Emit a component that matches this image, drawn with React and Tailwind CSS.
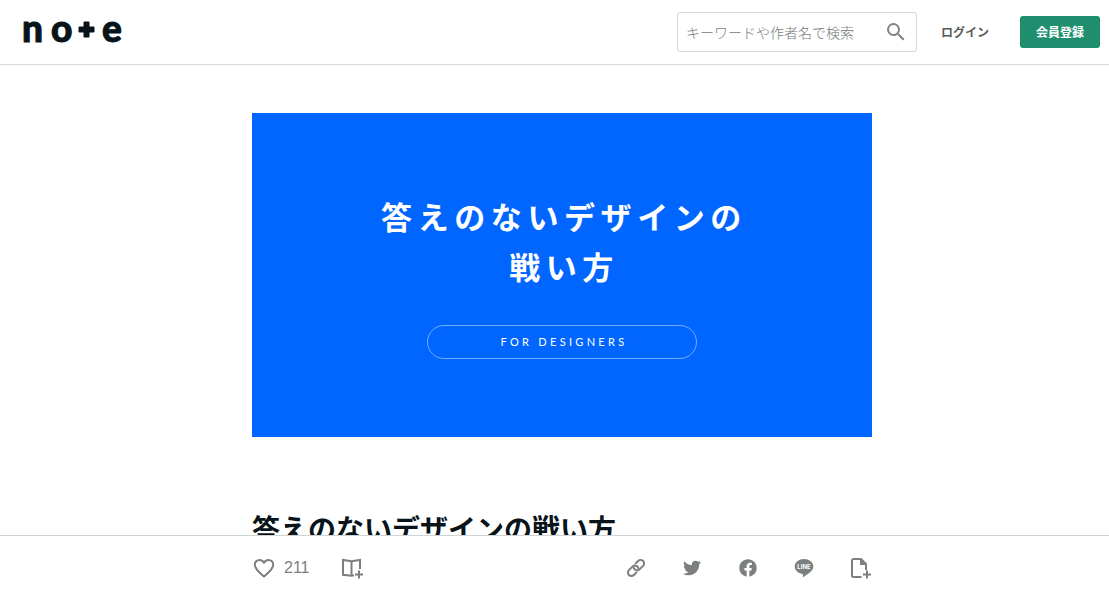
import React from 'react';
import { MdSearch } from 'react-icons/md';
import { FaFacebook, FaTwitter } from 'react-icons/fa';

function Logo() {
  return (
    <a href="#" aria-label="note" className="block">
      <svg className="h-16 w-[104px] overflow-visible fill-[#08131a] stroke-[#08131a] font-['Lato',sans-serif] text-[37px] leading-none font-black" viewBox="0 0 104 64" aria-hidden="true">
        <text x="-2" y="42">n</text>
        <text x="27" y="42">o</text>
        <path d="M60 22h5v5h5v5h-5v5h-5v-5h-5v-5h5z" />
        <text x="78" y="42">e</text>
      </svg>
    </a>
  );
}

function Header() {
  return (
    <header className="flex h-[65px] shrink-0 items-center border-b border-[#d9dbdb] pr-[9px] pl-6">
      <Logo />
      <form className="ml-auto flex h-10 w-60 items-center rounded-[3px] border border-[#d4d7d7] pr-2 pl-2" onSubmit={(e) => e.preventDefault()}>
        <input
          type="search"
          aria-label="キーワードや作者名で検索"
          placeholder="キーワードや作者名で検索"
          className="h-full min-w-0 flex-1 bg-transparent text-sm font-light text-[#444] outline-none placeholder:text-[#757b7b]"
        />
        <button type="submit" aria-label="検索" className="text-[#828585]">
          <MdSearch className="size-6" />
        </button>
      </form>
      <a href="#" className="ml-6 text-xs font-bold text-[#5a5c5c]">ログイン</a>
      <button type="button" className="ml-[31px] h-8 rounded-[3px] bg-[#1e8e6e] px-4 text-xs font-bold text-white">会員登録</button>
    </header>
  );
}

function Cover() {
  return (
    <div className="flex h-[324px] flex-col items-center bg-[#0066ff] pt-[78px] text-white">
      <p className="pl-1 text-center text-[31px] leading-[50px] font-bold tracking-[0.18em]">
        答えのないデザインの
        <br />
        戦い方
      </p>
      <p className="mt-[34px] flex h-[34px] w-[270px] items-center justify-center rounded-full border border-[#73adff] pl-1 font-['Lato',sans-serif] text-[11px] leading-4 tracking-[0.3em]">
        FOR DESIGNERS
      </p>
    </div>
  );
}

function HeartIcon() {
  return (
    <svg className="size-6" viewBox="0 0 24 24" fill="none" stroke="currentColor" strokeWidth="2" strokeLinejoin="round" aria-hidden="true">
      <path d="M12 20.500C8 17 2.800 13.200 2.800 8.800 2.800 5.900 4.900 4 7.400 4 9.400 4 11 5.100 12 6.800 13 5.100 14.600 4 16.600 4 19.100 4 21.200 5.900 21.200 8.800 21.200 13.200 16 17 12 20.500Z" />
    </svg>
  );
}

function MagazineAddIcon() {
  return (
    <svg className="size-6" viewBox="0 0 24 24" fill="none" stroke="currentColor" strokeWidth="2" aria-hidden="true">
      <path d="M14 19.200 11.500 19.800 3 18.800V4L11.500 5.200 20 4V13" />
      <path d="M11.500 5.200V20" />
      <path d="M19 14.500V22.500M15 18.500H23" />
    </svg>
  );
}

function LinkIcon() {
  return (
    <svg className="size-6" viewBox="0 0 24 24" fill="none" stroke="currentColor" strokeWidth="2" strokeLinecap="round" aria-hidden="true">
      <g transform="rotate(-45 12 12)">
        <path d="M9 15.500H5.500A3.500 3.500 0 0 1 5.500 8.500H10.500A3.500 3.500 0 0 1 13.500 13.700" />
        <path d="M15 8.500H18.500A3.500 3.500 0 0 1 18.500 15.500H13.500A3.500 3.500 0 0 1 10.500 10.300" />
      </g>
    </svg>
  );
}

function LineIcon() {
  return (
    <svg className="size-6" viewBox="0 0 24 24" aria-hidden="true">
      <path fill="currentColor" d="M12 3C6.800 3 2.700 6.300 2.700 10.500c0 3.700 3.300 6.700 7.700 7.400.6.200.7.500.6 1l-.2 1.500c0 .4.200.7.700.5 3.500-1.900 6.200-4.100 8.200-6.300 1.100-1.200 1.600-2.600 1.600-4.100C21.300 6.300 17.200 3 12 3Z" />
      <text x="12" y="12.800" textAnchor="middle" fill="white" className="font-['Inter',sans-serif] text-[6px] leading-none font-bold">LINE</text>
    </svg>
  );
}

function FileAddIcon() {
  return (
    <svg className="size-6" viewBox="0 0 24 24" fill="none" stroke="currentColor" strokeWidth="2" aria-hidden="true">
      <path d="M13.500 21H5.500A1.500 1.500 0 0 1 4 19.500V4.500A1.500 1.500 0 0 1 5.500 3H13L18 8V14" />
      <path d="M12 3 18 9H12Z" fill="currentColor" stroke="none" />
      <path d="M19 14.500V22.500M15 18.500H23" />
    </svg>
  );
}

function ActionBar() {
  return (
    <footer className="h-[65px] shrink-0 border-t border-[#d0d3d3] bg-white pl-[15px]">
      <div className="mx-auto flex h-full max-w-[620px] items-center text-[#7b7f7f]">
        <button type="button" aria-label="スキ" className="flex items-center gap-2">
          <HeartIcon />
          <span className="font-['Liberation_Sans',sans-serif] text-base">211</span>
        </button>
        <button type="button" aria-label="マガジンに追加" className="ml-[30px]">
          <MagazineAddIcon />
        </button>
        <div className="ml-auto flex items-center gap-8">
          <button type="button" aria-label="リンクをコピー"><LinkIcon /></button>
          <a href="#" aria-label="Twitter" className="flex size-6 items-center justify-center"><FaTwitter className="size-[18px]" /></a>
          <a href="#" aria-label="Facebook" className="flex size-6 items-center justify-center"><FaFacebook className="size-[18px]" /></a>
          <a href="#" aria-label="LINE"><LineIcon /></a>
          <button type="button" aria-label="ファイルに追加"><FileAddIcon /></button>
        </div>
      </div>
    </footer>
  );
}

export default function App() {
  return (
    <div className="flex h-screen flex-col overflow-hidden bg-white font-['Noto_Sans_CJK_JP',sans-serif]">
      <Header />
      <main className="min-h-0 flex-1 overflow-hidden pt-12 pl-[15px]">
        <article className="mx-auto max-w-[620px]">
          <Cover />
          <h1 className="mt-[70px] text-[28px] leading-[42px] font-bold text-[#08131a]">答えのないデザインの戦い方</h1>
        </article>
      </main>
      <ActionBar />
    </div>
  );
}
